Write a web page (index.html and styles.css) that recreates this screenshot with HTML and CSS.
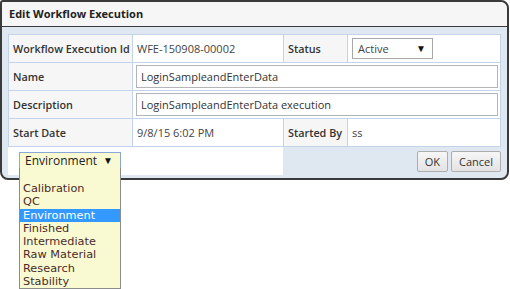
FILE: index.html
```html
<!DOCTYPE html>
<html lang="en">
<head>
    <meta charset="UTF-8">
    <title>Edit Workflow Execution</title>
    <link rel="stylesheet" href="styles.css">
</head>
<body>
    <div class="dialog">
        <div class="dialog-title">Edit Workflow Execution</div>
        <div class="dialog-body">
            <table class="form-table">
                <colgroup>
                    <col class="col-label">
                    <col class="col-value">
                    <col class="col-label2">
                    <col class="col-value2">
                </colgroup>
                <tr>
                    <th>Workflow Execution Id</th>
                    <td>WFE-150908-00002</td>
                    <th>Status</th>
                    <td>
                        <div class="select status-select">Active<span class="arrow">&#9660;</span></div>
                    </td>
                </tr>
                <tr>
                    <th>Name</th>
                    <td colspan="3" class="input-cell"><div class="text-input">LoginSampleandEnterData</div></td>
                </tr>
                <tr>
                    <th>Description</th>
                    <td colspan="3" class="input-cell"><div class="text-input">LoginSampleandEnterData execution</div></td>
                </tr>
                <tr>
                    <th>Start Date</th>
                    <td>9/8/15 6:02 PM</td>
                    <th>Started By</th>
                    <td>ss</td>
                </tr>
            </table>
            <div class="footer">
                <div class="footer-left">
                    <div class="select env-select">Environment<span class="arrow">&#9660;</span></div>
                    <ul class="env-list">
                        <li>&nbsp;</li>
                        <li>Calibration</li>
                        <li>QC</li>
                        <li class="selected">Environment</li>
                        <li>Finished</li>
                        <li>Intermediate</li>
                        <li>Raw Material</li>
                        <li>Research</li>
                        <li>Stability</li>
                    </ul>
                </div>
                <div class="footer-buttons">
                    <button class="btn">OK</button>
                    <button class="btn">Cancel</button>
                </div>
            </div>
        </div>
    </div>
</body>
</html>
```

FILE: styles.css
```css
html, body {
    margin: 0;
    min-height: 289px;
    background: #fff;
}
body {
    font-family: 'Open Sans', Arial, sans-serif;
    font-size: 11px;
    color: #333;
}
.dialog {
    width: 505px;
    border: 2px solid #3a3a3a;
    border-radius: 3px 8px 8px 8px;
    background: #dfe7f1;
}
.dialog-title {
    height: 24px;
    line-height: 23px;
    padding-left: 7px;
    font-weight: bold;
    font-size: 11px;
    color: #222;
    background: #f6f6f6;
    border-bottom: 1px solid #3a3a3a;
    border-radius: 2px 7px 0 0;
}
.dialog-body {
    padding: 7px 6px 3px 6px;
}
.form-table {
    width: 492px;
    table-layout: fixed;
    border-collapse: collapse;
    background: #fff;
}
.col-label { width: 124px; }
.col-value { width: 151px; }
.col-label2 { width: 64px; }
.col-value2 { width: 153px; }
.form-table th, .form-table td {
    border: 1px solid #c2d3ea;
    text-align: left;
    padding: 0 4px;
    height: 27px;
    white-space: nowrap;
    overflow: hidden;
}
.form-table th {
    font-weight: 600;
    font-size: 10.8px;
    background: #f6f6f6;
    color: #333;
}
.form-table td {
    color: #444;
}
.form-table .input-cell {
    padding: 0 2px 0 3px;
}
.select {
    position: relative;
    box-sizing: border-box;
    border: 1px solid #a9a9a9;
    height: 21px;
    line-height: 19px;
    padding-left: 5px;
    background: #fff;
    color: #444;
}
.arrow {
    position: absolute;
    right: 6px;
    top: 0;
    font-size: 10px;
    color: #111;
}
.status-select {
    width: 81px;
}
.text-input {
    box-sizing: border-box;
    width: 100%;
    border: 1px solid #b5b5b5;
    height: 23px;
    line-height: 21px;
    padding-left: 4px;
    color: #333;
}
.footer {
    display: flex;
    justify-content: space-between;
    height: 28px;
}
.footer-left {
    position: relative;
    width: 275px;
    background: #fff;
    padding: 5px 0 0 11px;
    box-sizing: border-box;
}
.env-select {
    width: 102px;
    height: 17px;
    line-height: 15px;
    font-size: 12px;
    background: #fafad2;
    border: 1px solid #8aa7d6;
    color: #222;
}
.env-select .arrow {
    right: 7px;
    line-height: 14px;
}
.env-list {
    position: absolute;
    left: 11px;
    top: 21px;
    width: 102px;
    box-sizing: border-box;
    margin: 0;
    padding: 0;
    list-style: none;
    background: #fafad2;
    border: 1px solid #8c8c8c;
    border-top: none;
    font-family: 'DejaVu Sans', Verdana, sans-serif;
    font-size: 11.3px;
    color: #4a2a2a;
    z-index: 2;
}
.env-list li {
    height: 13.3px;
    line-height: 13px;
    padding-left: 3px;
}
.env-list li:first-child {
    height: 14px;
}
.env-list .selected {
    background: #3399ff;
    color: #fff;
}
.footer-buttons {
    display: flex;
    gap: 3px;
    padding-top: 4px;
}
.btn {
    font-family: 'Open Sans', Arial, sans-serif;
    font-size: 11px;
    height: 21px;
    padding: 0 7px;
    background: linear-gradient(#f6f6f6, #e4e4e4);
    border: 1px solid #adadad;
    border-radius: 2px;
    color: #333;
}
```
